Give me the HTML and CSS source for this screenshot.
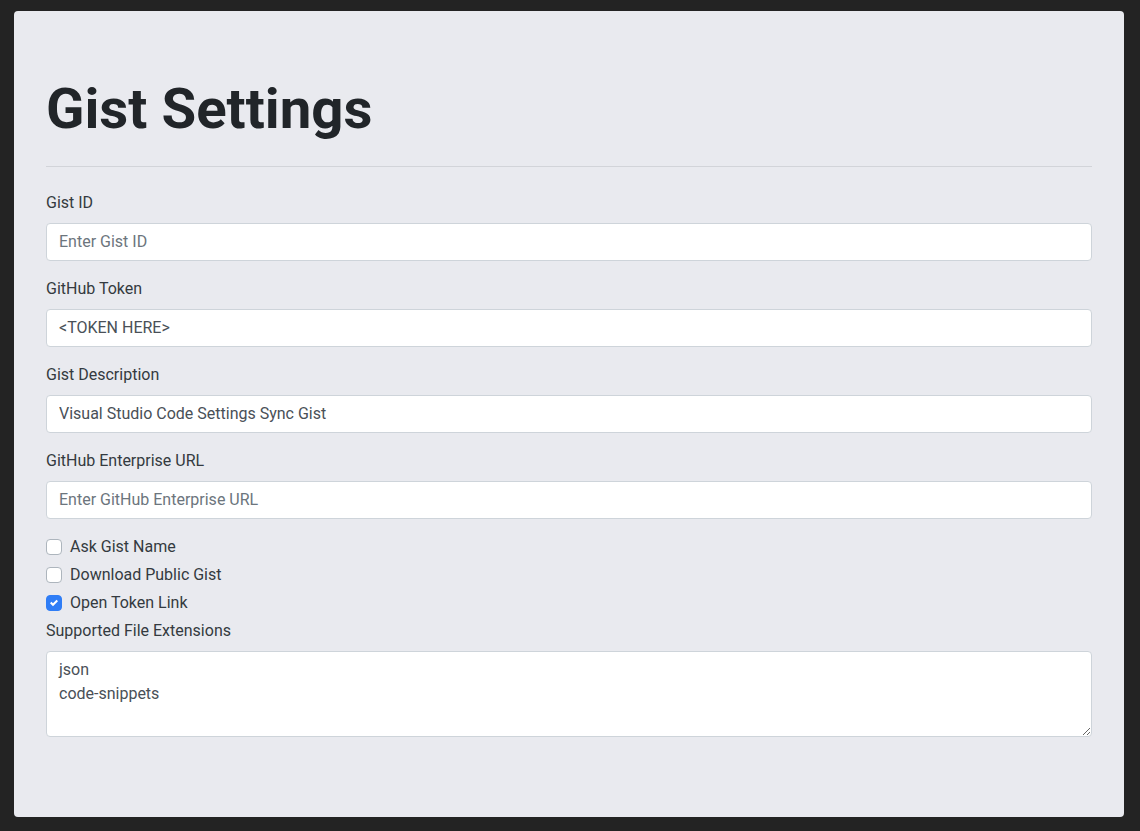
FILE: index.html
```html
<!DOCTYPE html>
<html lang="en">
<head>
<meta charset="utf-8">
<title>Gist Settings</title>
<link rel="stylesheet" href="styles.css">
</head>
<body>
<main class="card">
  <h1 class="title">Gist Settings</h1>
  <hr class="divider">
  <form class="form">
    <div class="form-group">
      <label class="label" for="gistId">Gist ID</label>
      <input class="input" id="gistId" type="text" placeholder="Enter Gist ID">
    </div>
    <div class="form-group">
      <label class="label" for="token">GitHub Token</label>
      <input class="input" id="token" type="text" value="&lt;TOKEN HERE&gt;">
    </div>
    <div class="form-group">
      <label class="label" for="desc">Gist Description</label>
      <input class="input" id="desc" type="text" value="Visual Studio Code Settings Sync Gist">
    </div>
    <div class="form-group">
      <label class="label" for="ghe">GitHub Enterprise URL</label>
      <input class="input" id="ghe" type="text" placeholder="Enter GitHub Enterprise URL">
    </div>
    <div class="check">
      <span class="box"></span>
      <span class="check-label">Ask Gist Name</span>
    </div>
    <div class="check">
      <span class="box"></span>
      <span class="check-label">Download Public Gist</span>
    </div>
    <div class="check">
      <span class="box box-checked"><svg viewBox="0 0 8 8" width="8" height="8"><path fill="#fff" d="M6.564.75l-3.59 3.612-1.538-1.55L0 4.26 2.974 7.25 8 2.193z"/></svg></span>
      <span class="check-label">Open Token Link</span>
    </div>
    <div class="form-group">
      <label class="label" for="ext">Supported File Extensions</label>
      <textarea class="input textarea" id="ext" rows="3">json
code-snippets</textarea>
    </div>
  </form>
</main>
</body>
</html>
```
FILE: styles.css
```css
html, body {
  height: 100%;
}
body {
  margin: 0;
  background: #232323;
  font-family: Roboto, "Liberation Sans", Arial, sans-serif;
  font-size: 16px;
  line-height: 1.5;
  color: #212529;
  padding: 11px 16px 14px 14px;
  box-sizing: border-box;
}
.card {
  background: #e9eaef;
  border-radius: 4px;
  padding: 65px 32px 64px 32px;
  height: 100%;
  box-sizing: border-box;
}
.title {
  margin: 0;
  font-size: 56.4px;
  font-weight: 700;
  line-height: 1.2;
  color: #212529;
}
.divider {
  margin: 22px 0 24px 0;
  border: 0;
  border-top: 1px solid #d2d4d9;
}
.form {
  margin: 0;
}
.form-group {
  margin-bottom: 16px;
}
.label {
  display: block;
  margin-bottom: 8px;
  color: #343a40;
}
.input {
  display: block;
  width: 100%;
  box-sizing: border-box;
  height: 38px;
  padding: 6px 12px;
  font-family: inherit;
  font-size: 16px;
  line-height: 1.5;
  color: #495057;
  background: #fff;
  border: 1px solid #ced4da;
  border-radius: 4px;
  margin: 0;
}
.input::placeholder {
  color: #6c757d;
  opacity: 1;
}
.textarea {
  height: 86px;
  resize: vertical;
}
.check {
  display: flex;
  align-items: center;
  min-height: 24px;
  margin-bottom: 4px;
  color: #343a40;
}
.box {
  width: 16px;
  height: 16px;
  box-sizing: border-box;
  border: 1px solid #adb5bd;
  border-radius: 4px;
  background: #fff;
  margin-right: 8px;
  display: flex;
  align-items: center;
  justify-content: center;
}
.box-checked {
  background: #2f7df6;
  border-color: #2f7df6;
}
.check-label {
  line-height: 24px;
}
```
